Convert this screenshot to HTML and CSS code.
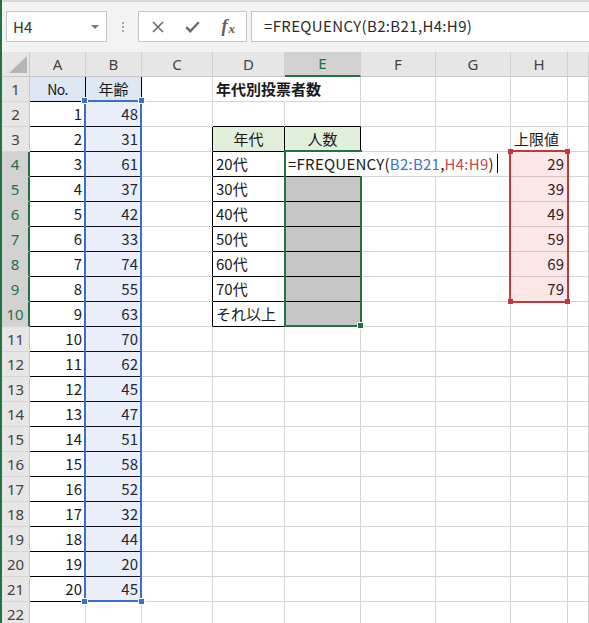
FILE: index.html
```html
<!DOCTYPE html>
<html lang="ja">
<head>
<meta charset="utf-8">
<title>FREQUENCY</title>
<link rel="stylesheet" href="styles.css">
</head>
<body>
<div class="app">
  <div class="toolbar">
    <div class="namebox">
      <span class="nb-text">H4</span>
      <span class="nb-arrow"></span>
    </div>
    <div class="dots"><i></i><i></i><i></i></div>
    <div class="btnbox">
      <span class="btn">
        <svg width="12" height="12" viewBox="0 0 12 12"><path d="M1 1 L11 11 M11 1 L1 11" stroke="#6a6a6a" stroke-width="1.6" fill="none"/></svg>
      </span>
      <span class="btn">
        <svg width="15" height="12" viewBox="0 0 15 12"><path d="M1.2 6.2 L5.3 10.2 L13.8 1.2" stroke="#6a6a6a" stroke-width="2.4" fill="none"/></svg>
      </span>
      <span class="btn fx"><span class="fx-f">f</span><span class="fx-x">x</span></span>
    </div>
    <div class="fbox">=FREQUENCY(B2:B21,H4:H9)</div>
  </div>

  <div class="sheet">
    <div class="cn"><svg width="18" height="17" viewBox="0 0 18 17"><polygon points="0,17 18,17 18,0" fill="#b5b5b5"/></svg></div>
    <div class="ch">A</div><div class="ch">B</div><div class="ch">C</div><div class="ch">D</div><div class="ch sel">E</div><div class="ch">F</div><div class="ch">G</div><div class="ch">H</div><div class="ch"></div>

    <div class="rh">1</div><div class="c bk hb ct no">No.</div><div class="c bk hb ct">年齢</div><div class="c"></div><div class="c ttl">年代別投票者数</div><div class="c"></div><div class="c"></div><div class="c"></div><div class="c"></div><div class="c"></div>
    <div class="rh">2</div><div class="c bk n">1</div><div class="c bk n">48</div><div class="c"></div><div class="c bkb"></div><div class="c bkb"></div><div class="c"></div><div class="c"></div><div class="c"></div><div class="c"></div>
    <div class="rh">3</div><div class="c bk n">2</div><div class="c bk n">31</div><div class="c bkr"></div><div class="c bk hg ct">年代</div><div class="c bk hg ct">人数</div><div class="c"></div><div class="c"></div><div class="c">上限値</div><div class="c"></div>
    <div class="rh sel">4</div><div class="c bk n">3</div><div class="c bk n">61</div><div class="c bkr"></div><div class="c bk">20代</div><div class="c bk"></div><div class="c"></div><div class="c"></div><div class="c n">29</div><div class="c"></div>
    <div class="rh sel">5</div><div class="c bk n">4</div><div class="c bk n">37</div><div class="c bkr"></div><div class="c bk">30代</div><div class="c bk gy"></div><div class="c"></div><div class="c"></div><div class="c n">39</div><div class="c"></div>
    <div class="rh sel">6</div><div class="c bk n">5</div><div class="c bk n">42</div><div class="c bkr"></div><div class="c bk">40代</div><div class="c bk gy"></div><div class="c"></div><div class="c"></div><div class="c n">49</div><div class="c"></div>
    <div class="rh sel">7</div><div class="c bk n">6</div><div class="c bk n">33</div><div class="c bkr"></div><div class="c bk">50代</div><div class="c bk gy"></div><div class="c"></div><div class="c"></div><div class="c n">59</div><div class="c"></div>
    <div class="rh sel">8</div><div class="c bk n">7</div><div class="c bk n">74</div><div class="c bkr"></div><div class="c bk">60代</div><div class="c bk gy"></div><div class="c"></div><div class="c"></div><div class="c n">69</div><div class="c"></div>
    <div class="rh sel">9</div><div class="c bk n">8</div><div class="c bk n">55</div><div class="c bkr"></div><div class="c bk">70代</div><div class="c bk gy"></div><div class="c"></div><div class="c"></div><div class="c n">79</div><div class="c"></div>
    <div class="rh sel">10</div><div class="c bk n">9</div><div class="c bk n">63</div><div class="c bkr"></div><div class="c bk">それ以上</div><div class="c bk gy"></div><div class="c"></div><div class="c"></div><div class="c"></div><div class="c"></div>
    <div class="rh">11</div><div class="c bk n">10</div><div class="c bk n">70</div><div class="c"></div><div class="c"></div><div class="c"></div><div class="c"></div><div class="c"></div><div class="c"></div><div class="c"></div>
    <div class="rh">12</div><div class="c bk n">11</div><div class="c bk n">62</div><div class="c"></div><div class="c"></div><div class="c"></div><div class="c"></div><div class="c"></div><div class="c"></div><div class="c"></div>
    <div class="rh">13</div><div class="c bk n">12</div><div class="c bk n">45</div><div class="c"></div><div class="c"></div><div class="c"></div><div class="c"></div><div class="c"></div><div class="c"></div><div class="c"></div>
    <div class="rh">14</div><div class="c bk n">13</div><div class="c bk n">47</div><div class="c"></div><div class="c"></div><div class="c"></div><div class="c"></div><div class="c"></div><div class="c"></div><div class="c"></div>
    <div class="rh">15</div><div class="c bk n">14</div><div class="c bk n">51</div><div class="c"></div><div class="c"></div><div class="c"></div><div class="c"></div><div class="c"></div><div class="c"></div><div class="c"></div>
    <div class="rh">16</div><div class="c bk n">15</div><div class="c bk n">58</div><div class="c"></div><div class="c"></div><div class="c"></div><div class="c"></div><div class="c"></div><div class="c"></div><div class="c"></div>
    <div class="rh">17</div><div class="c bk n">16</div><div class="c bk n">52</div><div class="c"></div><div class="c"></div><div class="c"></div><div class="c"></div><div class="c"></div><div class="c"></div><div class="c"></div>
    <div class="rh">18</div><div class="c bk n">17</div><div class="c bk n">32</div><div class="c"></div><div class="c"></div><div class="c"></div><div class="c"></div><div class="c"></div><div class="c"></div><div class="c"></div>
    <div class="rh">19</div><div class="c bk n">18</div><div class="c bk n">44</div><div class="c"></div><div class="c"></div><div class="c"></div><div class="c"></div><div class="c"></div><div class="c"></div><div class="c"></div>
    <div class="rh">20</div><div class="c bk n">19</div><div class="c bk n">20</div><div class="c"></div><div class="c"></div><div class="c"></div><div class="c"></div><div class="c"></div><div class="c"></div><div class="c"></div>
    <div class="rh">21</div><div class="c bk n">20</div><div class="c bk n">45</div><div class="c"></div><div class="c"></div><div class="c"></div><div class="c"></div><div class="c"></div><div class="c"></div><div class="c"></div>
    <div class="rh">22</div><div class="c"></div><div class="c"></div><div class="c"></div><div class="c"></div><div class="c"></div><div class="c"></div><div class="c"></div><div class="c"></div><div class="c"></div>

    <div class="ref-blue">
      <span class="hd tl"></span><span class="hd tr"></span><span class="hd bl"></span><span class="hd br"></span>
    </div>
    <div class="ref-red">
      <span class="rd tl"></span><span class="rd tr"></span><span class="rd bl"></span><span class="rd br"></span>
    </div>
    <div class="selection"><span class="fill-handle"></span></div>
    <div class="editor">=FREQUENCY(<span class="rfb">B2:B21</span>,<span class="rfr">H4:H9</span>)<span class="caret"></span></div>
  </div>
</div>
</body>
</html>
```

FILE: styles.css
```css
html, body {
  margin: 0;
  padding: 0;
}
body {
  width: 589px;
  height: 623px;
  overflow: hidden;
  background: #fff;
  font-family: "Noto Sans CJK JP", "Noto Sans", sans-serif;
  font-size: 15px;
  color: #1a1a1a;
}
.app {
  height: 623px;
  border-left: 2px solid #217346;
  overflow: hidden;
}

/* ---------- toolbar ---------- */
.toolbar {
  height: 52px;
  box-sizing: border-box;
  background: #f3f3f3;
  border-top: 2px solid #d6d6d6;
  display: flex;
  align-items: flex-start;
  padding-top: 9px;
}
.namebox {
  margin-left: 4px;
  width: 101px;
  height: 31px;
  box-sizing: border-box;
  background: #fff;
  border: 1px solid #c6c6c6;
  display: flex;
  align-items: center;
  justify-content: space-between;
  padding: 0 7px 0 6px;
}
.nb-text {
  font-size: 15px;
  color: #333;
}
.nb-arrow {
  width: 0;
  height: 0;
  border-left: 4px solid transparent;
  border-right: 4px solid transparent;
  border-top: 4px solid #787878;
}
.dots {
  width: 31px;
  height: 31px;
  display: flex;
  flex-direction: column;
  align-items: center;
  justify-content: center;
  gap: 2px;
}
.dots i {
  display: block;
  width: 2px;
  height: 2px;
  background: #a6a6a6;
}
.btnbox {
  width: 109px;
  height: 31px;
  box-sizing: border-box;
  background: #fff;
  border: 1px solid #c6c6c6;
  display: flex;
  align-items: center;
  padding-left: 1px;
}
.btn {
  width: 36px;
  height: 29px;
  display: flex;
  align-items: center;
  justify-content: center;
}
.fx {
  font-family: "Liberation Serif", serif;
  font-style: italic;
  color: #5f5f5f;
  font-weight: bold;
}
.fx-f {
  font-size: 18px;
}
.fx-x {
  font-size: 13px;
  margin-top: 5px;
  margin-left: 1px;
}
.fbox {
  flex: 1;
  margin-left: 4px;
  margin-right: -4px;
  height: 31px;
  box-sizing: border-box;
  background: #fff;
  border: 1px solid #c6c6c6;
  padding-left: 12px;
  line-height: 28px;
  color: #2b2b2b;
  font-size: 15px;
  letter-spacing: 0.35px;
  white-space: nowrap;
}

/* ---------- sheet ---------- */
.sheet {
  position: relative;
  display: grid;
  grid-template-columns: 28px 56px 56px 71px 72px 76px 75px 75px 57px 21px;
  grid-auto-rows: 25px;
}
.cn {
  background: #e6e6e6;
  border-right: 1px solid #c8c8c8;
  border-bottom: 1px solid #c8c8c8;
  box-sizing: border-box;
  display: flex;
  align-items: flex-end;
  justify-content: flex-end;
  padding: 0 2px 3px 0;
}
.ch {
  background: #e6e6e6;
  border-right: 1px solid #d0d0d0;
  border-bottom: 1px solid #c8c8c8;
  box-sizing: border-box;
  text-align: center;
  line-height: 24px;
  font-family: "Noto Sans", sans-serif;
  font-size: 15px;
  color: #444;
}
.ch.sel {
  background: #d2d2d2;
  border-bottom: 2px solid #217346;
  color: #217346;
  line-height: 23px;
}
.rh {
  background: #e6e6e6;
  border-right: 1px solid #c8c8c8;
  border-bottom: 1px solid #d6d6d6;
  box-sizing: border-box;
  text-align: center;
  line-height: 24px;
  font-family: "Noto Sans", sans-serif;
  font-size: 15px;
  color: #444;
}
.rh.sel {
  background: #d2d2d2;
  border-right: 2px solid #217346;
  color: #217346;
}
.c {
  box-sizing: border-box;
  border-right: 1px solid #d4d4d4;
  border-bottom: 1px solid #d4d4d4;
  padding: 0 3px;
  line-height: 24px;
  white-space: nowrap;
  overflow: hidden;
}
.n { text-align: right; }
.ct { text-align: center; }
.no { font-size: 14px; letter-spacing: -0.6px; }
.bk { border-right-color: #000; border-bottom-color: #000; }
.bkr { border-right-color: #000; }
.bkb { border-bottom-color: #000; }
.hb { background: #dde8f4; }
.hg { background: #e2efda; }
.gy { background: #c6c6c6; }
.ttl {
  font-weight: bold;
  overflow: visible;
  border-right-color: #fff;
}

/* ---------- overlays ---------- */
.ref-blue {
  position: absolute;
  left: 82px;
  top: 48px;
  width: 58px;
  height: 502px;
  box-sizing: border-box;
  border: 2px solid #3a70c6;
  background: rgba(70, 115, 200, 0.12);
  z-index: 2;
}
.hd {
  position: absolute;
  width: 5px;
  height: 5px;
  background: #3a70c6;
  border: 1px solid #fff;
}
.hd.tl { left: -5px; top: -5px; }
.hd.tr { right: -5px; top: -5px; }
.hd.bl { left: -5px; bottom: -5px; }
.hd.br { right: -5px; bottom: -5px; }

.ref-red {
  position: absolute;
  left: 507px;
  top: 98px;
  width: 60px;
  height: 153px;
  box-sizing: border-box;
  border: 2px solid #c0393f;
  background: rgba(220, 60, 60, 0.12);
  z-index: 2;
}
.rd {
  position: absolute;
  width: 5px;
  height: 5px;
  background: #c0393f;
}
.rd.tl { left: -3px; top: -3px; }
.rd.tr { right: -3px; top: -3px; }
.rd.bl { left: -3px; bottom: -3px; }
.rd.br { right: -3px; bottom: -3px; }

.selection {
  position: absolute;
  left: 282px;
  top: 98px;
  width: 78px;
  height: 177px;
  box-sizing: border-box;
  border: 2px solid #217346;
  z-index: 2;
}
.fill-handle {
  position: absolute;
  right: -4px;
  bottom: -4px;
  width: 5px;
  height: 5px;
  background: #217346;
  border: 1px solid #fff;
}
.editor {
  position: absolute;
  left: 285px;
  top: 100px;
  width: 214px;
  height: 24px;
  background: #fff;
  z-index: 3;
  padding-left: 1px;
  box-sizing: border-box;
  line-height: 24px;
  letter-spacing: 0.25px;
  white-space: nowrap;
}
.rfb { color: #3a72cf; }
.rfr { color: #c4474c; }
.caret {
  position: absolute;
  left: 210px;
  top: 2px;
  width: 1px;
  height: 19px;
  background: #000;
}
```
